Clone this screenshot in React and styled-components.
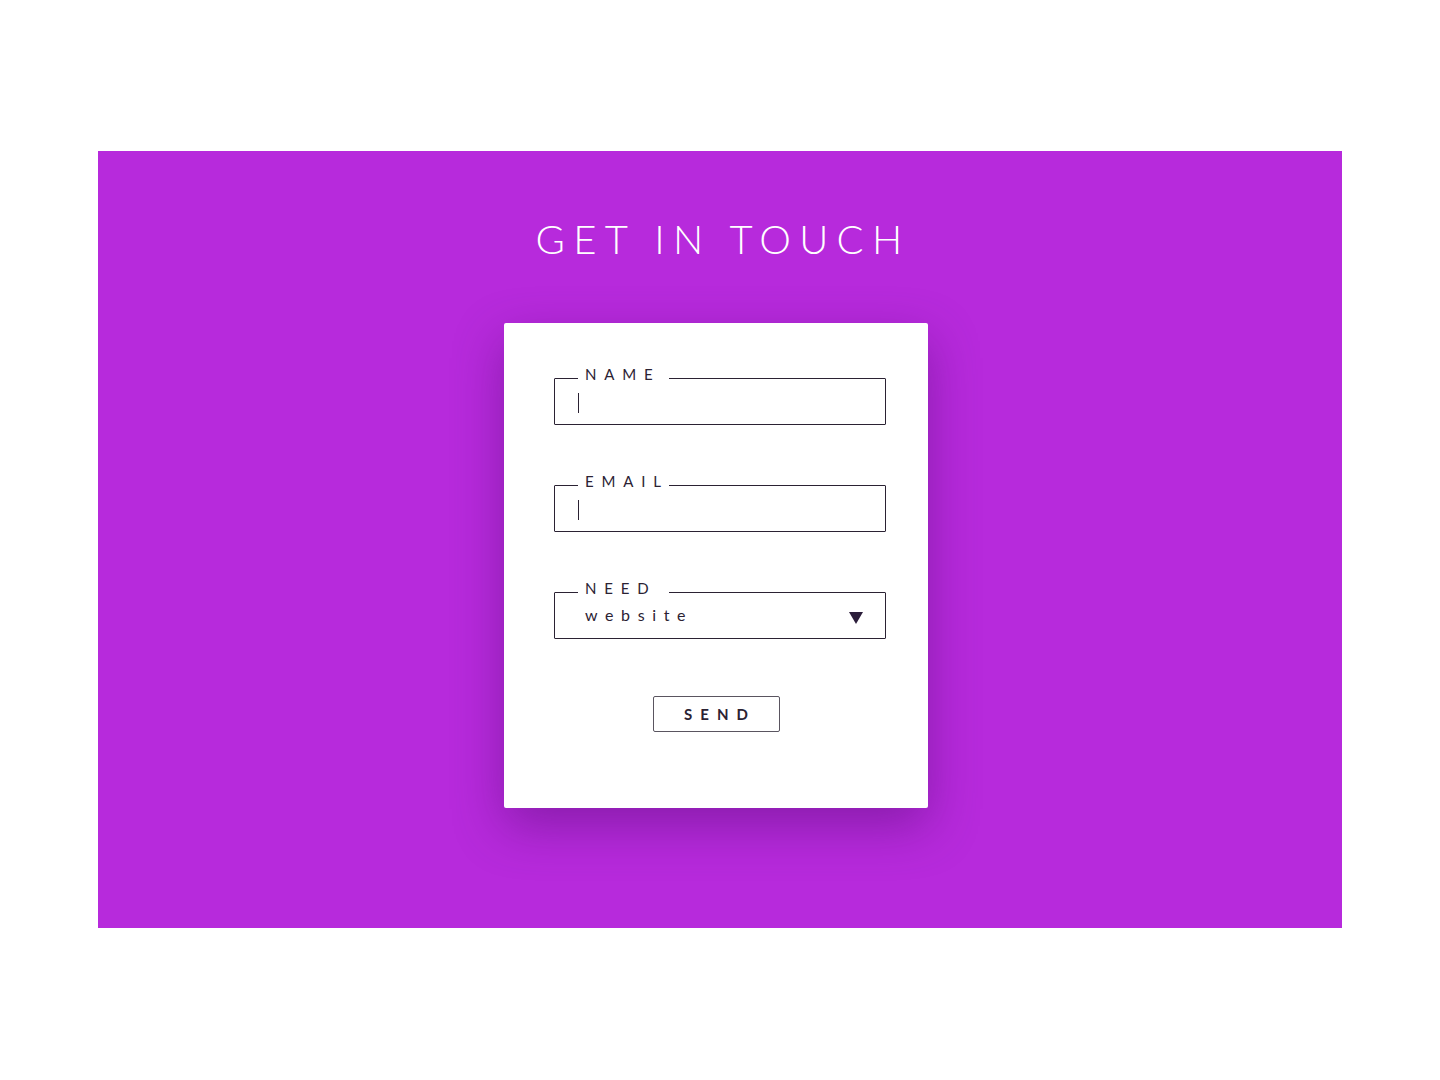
import React from "react";
import styled, { createGlobalStyle } from "styled-components";

const GlobalStyle = createGlobalStyle`
  body {
    margin: 0;
    background: #ffffff;
    font-family: "Lato", "Noto Sans", sans-serif;
  }
`;

const Page = styled.div`
  padding: 151px 98px;
`;

const Section = styled.section`
  background: #b72adc;
  height: 777px;
  display: flex;
  flex-direction: column;
  align-items: center;
  padding-top: 62px;
  box-sizing: border-box;
`;

const Title = styled.h1`
  margin: 0 0 0 6px;
  font-weight: 300;
  font-size: 40px;
  line-height: 52px;
  letter-spacing: 8.3px;
  color: #ffffff;
`;

const Card = styled.form`
  margin: 58px 8px 0 0;
  width: 424px;
  height: 485px;
  background: #ffffff;
  border-radius: 2px;
  box-shadow: 0 18px 50px rgba(80, 10, 110, 0.45);
  box-sizing: border-box;
  padding: 47px 42px 0 50px;
  display: flex;
  flex-direction: column;
  gap: 14px;
`;

const Field = styled.fieldset`
  margin: 0 0 38px;
  height: 55px;
  border: 1px solid #2b2233;
  border-radius: 1px;
  box-sizing: border-box;
  display: flex;
  align-items: center;
  padding: 0 22px 0 30px;
  position: relative;
`;

const Legend = styled.legend`
  margin-left: -7px;
  width: 91px;
  box-sizing: border-box;
  padding: 0 0 0 7px;
  font-size: 15px;
  letter-spacing: 7.8px;
  color: #2b2233;
  line-height: 16px;
  position: relative;
  top: -4px;
`;

const Caret = styled.span`
  position: absolute;
  left: 23px;
  top: 7px;
  width: 1px;
  height: 20px;
  background: #2b2233;
`;

const Value = styled.span`
  flex: 1;
  font-size: 16px;
  letter-spacing: 7.6px;
  color: #2b2233;
  margin-top: 4px;
`;

const Arrow = styled.svg`
  width: 14px;
  height: 12px;
  margin-top: 12px;
  fill: #2b1d3a;
`;

const SendRow = styled.div`
  display: flex;
  justify-content: center;
  margin-top: 5px;
  padding-right: 8px;
`;

const SendButton = styled.button`
  width: 127px;
  height: 36px;
  background: #ffffff;
  border: 1px solid #5a5560;
  border-radius: 2px;
  font-family: "Lato", "Noto Sans", sans-serif;
  font-weight: 700;
  font-size: 15px;
  letter-spacing: 8px;
  padding: 0 0 0 8px;
  color: #2b2233;
`;

const TextField = ({ label }) => (
  <Field>
    <Legend>{label}</Legend>
    <Caret />
  </Field>
);

export default function App() {
  return (
    <>
      <GlobalStyle />
      <Page>
        <Section>
          <Title>GET IN TOUCH</Title>
          <Card onSubmit={(e) => e.preventDefault()}>
            <TextField label="NAME" />
            <TextField label="EMAIL" />
            <Field>
              <Legend>NEED</Legend>
              <Value>website</Value>
              <Arrow viewBox="0 0 14 12">
                <path d="M0 0 H14 L7 12 Z" />
              </Arrow>
            </Field>
            <SendRow>
              <SendButton type="submit">SEND</SendButton>
            </SendRow>
          </Card>
        </Section>
      </Page>
    </>
  );
}
